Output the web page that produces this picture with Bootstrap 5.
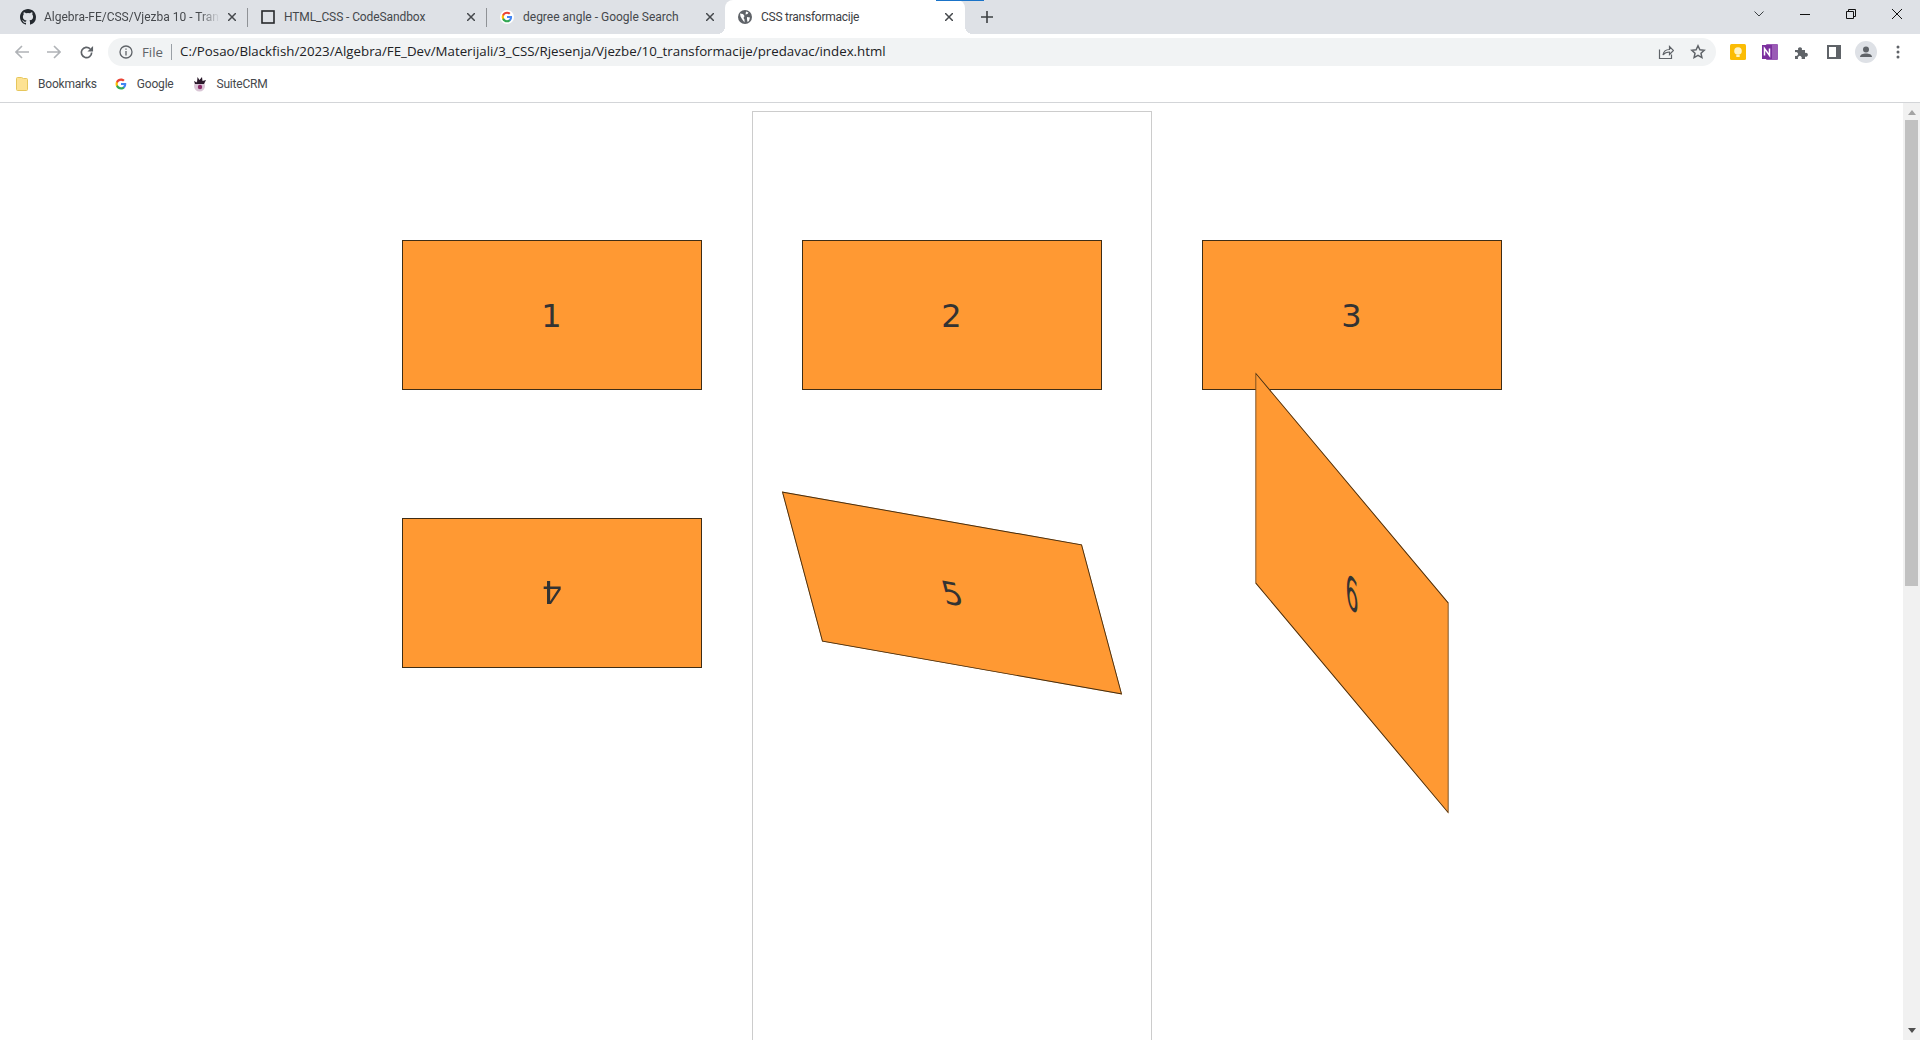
<!DOCTYPE html>
<html lang="en">
<head>
    <meta charset="UTF-8">
    <title>CSS transformacije</title>
    <link href="https://cdn.jsdelivr.net/npm/bootstrap@5.3.0/dist/css/bootstrap.min.css" rel="stylesheet">
    <style>
        html, body { height: 100%; overflow: hidden; }
        body { font-family: "Open Sans", "Liberation Sans", sans-serif; background: #fff; }
        .tabstrip { height: 34px; background: #dee1e6; color: #45484c; font-family: Roboto, "Liberation Sans", sans-serif; font-size: 12px; }
        .tabitem { width: 238px; height: 34px; padding: 0 11px 0 13px; gap: 9px; letter-spacing: -.1px; }
        .tabitem.first { width: 247px; padding-left: 20px; gap: 8px; letter-spacing: 0; }
        .tabitem.plain { letter-spacing: 0; }
        .tabitem.on { width: 240px; background: #fff; border-radius: 8px 8px 0 0; color: #3c4043; padding-right: 12px; letter-spacing: -.25px; }
        .tabitem.on::before, .tabitem.on::after { content: ""; position: absolute; bottom: 0; width: 8px; height: 8px; }
        .tabitem.on::before { left: -8px; background: radial-gradient(circle at 0 0, transparent 8px, #fff 8px); }
        .tabitem.on::after { right: -8px; background: radial-gradient(circle at 100% 0, transparent 8px, #fff 8px); }
        .tabname { flex: 1; white-space: nowrap; overflow: hidden; }
        .tabname.fade-end { -webkit-mask-image: linear-gradient(to right, #000 88%, transparent 100%); mask-image: linear-gradient(to right, #000 88%, transparent 100%); }
        .tabsep { width: 1px; height: 19px; background: #8f9296; }
        .tabplus { margin-left: 16px; }
        .loadbar { position: absolute; top: 0; left: 936px; width: 48px; height: 1px; background: #1a73c8; }
        .winctls { margin-right: 18px; margin-top: -6px; gap: 36px; }
        .toolrow { height: 36px; background: #fff; padding-left: 6px; }
        .navbtn { width: 32px; height: 36px; }
        .urlbox { width: 1608px; height: 28px; margin-left: 6px; background: #f1f3f4; border-radius: 14px; font-size: 13.3px; color: #202124; padding: 0 10px 0 11px; }
        .urlfile { color: #5f6368; margin-left: 9px; padding-right: 8px; border-right: 1px solid #9aa0a6; line-height: 16px; }
        .urltext { margin-left: 8px; flex: 1; white-space: nowrap; }
        .extgap { margin-left: 16px; }
        .extfirst { margin-left: 14px; }
        .extprofile { margin-left: 13px; }
        .extdots { margin-left: 19px; }
        .markrow { height: 33px; background: #fff; border-bottom: 1px solid #d3d5d8; padding: 0 0 4px 16px; font-family: Roboto, "Liberation Sans", sans-serif; font-size: 12px; letter-spacing: -.2px; color: #45484c; gap: 18px; }
        .markitem { gap: 10px; }
        .stage { height: 937px; }
        .pagearea { flex: 1; overflow: hidden; }
        .boxgrid { width: 1200px; margin: 0 auto; padding-top: 8px; }
        .boxcol { width: 400px; height: 1100px; padding: 129px 50px 0; flex-direction: column; gap: 128px; }
        .boxcol.mid { border: 1px solid #ccc; padding: 128px 49px 0; }
        .tbox { width: 300px; height: 150px; background: #ff9933; border: 1px solid #3f2d15; color: #333; font-family: "DejaVu Sans", sans-serif; font-size: 32px; line-height: 1; padding-top: 2px; }
        .rot { transform: rotate(180deg); }
        .skw { transform: skew(15deg, 10deg); }
        .mtx { transform: matrix(0.643, 0.767, 0, 1.407, 0, 0); }
        .scrollrail { width: 17px; background: #f1f1f1; }
        .arrowup { margin-top: 7px; margin-bottom: 5px; }
        .arrowdown { margin-bottom: 7px; }
        .scrollthumb { height: 466px; width: 13px; background: #c1c1c1; }
    </style>
</head>
<body class="position-relative">
    <div class="tabstrip d-flex align-items-center">
        <div class="tabitem first d-flex align-items-center">
            <svg width="16" height="16" viewBox="0 0 16 16" fill="#24292f"><path d="M8 0C3.58 0 0 3.58 0 8c0 3.54 2.29 6.53 5.47 7.59.4.07.55-.17.55-.38v-1.34c-2.23.48-2.7-1.07-2.7-1.07-.36-.93-.89-1.17-.89-1.17-.73-.5.05-.49.05-.49.8.06 1.23.82 1.23.82.71 1.22 1.87.87 2.33.66.07-.52.28-.87.5-1.07-1.78-.2-3.64-.89-3.64-3.95 0-.87.31-1.59.82-2.15-.08-.2-.36-1.02.08-2.12 0 0 .67-.21 2.2.82a7.6 7.6 0 0 1 4 0c1.53-1.04 2.2-.82 2.2-.82.44 1.1.16 1.92.08 2.12.51.56.82 1.27.82 2.15 0 3.07-1.87 3.75-3.65 3.95.29.25.54.73.54 1.48v2.2c0 .21.15.46.55.38A8 8 0 0 0 16 8c0-4.42-3.58-8-8-8z"/></svg>
            <span class="tabname fade-end">Algebra-FE/CSS/Vjezba 10 - Tran</span>
            <svg width="8" height="8" viewBox="0 0 8 8" stroke="#45484c" stroke-width="1.5"><path d="M0 0l8 8M8 0L0 8"/></svg>
        </div>
        <div class="tabsep"></div>
        <div class="tabitem d-flex align-items-center">
            <svg width="14" height="14" viewBox="0 0 14 14" fill="none" stroke="#26282b" stroke-width="1.6"><rect x="1" y="1" width="12" height="12"/></svg>
            <span class="tabname">HTML_CSS - CodeSandbox</span>
            <svg width="8" height="8" viewBox="0 0 8 8" stroke="#45484c" stroke-width="1.5"><path d="M0 0l8 8M8 0L0 8"/></svg>
        </div>
        <div class="tabsep"></div>
        <div class="tabitem plain d-flex align-items-center">
            <svg width="14" height="14" viewBox="-5 -5 58 58"><circle cx="24" cy="24" r="29" fill="#fff"/><path fill="#4285f4" d="M45 24c0-1.600-.1-3-.4-4.400H24v8.400h11.800c-.5 2.700-2 5-4.300 6.600v5.500h7C42.600 36.300 45 30.700 45 24z"/><path fill="#34a853" d="M24 46c5.900 0 10.900-2 14.500-5.300l-7-5.500c-2 1.300-4.500 2.100-7.500 2.100-5.700 0-10.600-3.900-12.300-9H4.400v5.600C8 41 15.500 46 24 46z"/><path fill="#fbbc05" d="M11.700 28.300c-.9-2.700-.9-5.800 0-8.600v-5.600H4.400c-3 6-3 13.800 0 19.800z"/><path fill="#ea4335" d="M24 10.800c3.200 0 6.100 1.100 8.400 3.300l6.200-6.200C34.900 4.400 29.900 2 24 2 15.500 2 8 7 4.400 14.100l7.300 5.600c1.700-5 6.600-8.900 12.300-8.900z"/></svg>
            <span class="tabname">degree angle - Google Search</span>
            <svg width="8" height="8" viewBox="0 0 8 8" stroke="#45484c" stroke-width="1.5"><path d="M0 0l8 8M8 0L0 8"/></svg>
        </div>
        <div class="tabitem on position-relative d-flex align-items-center">
            <svg width="14" height="14" viewBox="0 0 14 14"><circle cx="7" cy="7" r="7" fill="#5f6368"/><path fill="#fff" d="M2 3.500l3 .5 1.500 2-1 2 1 1.500v3L4 9 2.500 6.500zM8 1.500l2.500 1-1 1.500-2 .5zM9 7l3 .5-1 3.500-1.500 1-.5-3z"/></svg>
            <span class="tabname">CSS transformacije</span>
            <svg width="8" height="8" viewBox="0 0 8 8" stroke="#45484c" stroke-width="1.5"><path d="M0 0l8 8M8 0L0 8"/></svg>
        </div>
        <svg class="tabplus" width="12" height="12" viewBox="0 0 12 12" stroke="#3c4043" stroke-width="1.6"><path d="M6 0v12M0 6h12"/></svg>
        <div class="winctls ms-auto d-flex align-items-center">
            <svg width="10" height="10" viewBox="0 0 10 10" fill="none" stroke="#3c4043"><path d="M.5 2.500L5 7l4.500-4.500"/></svg>
            <svg width="10" height="10" viewBox="0 0 10 10" stroke="#111"><path d="M0 5.500h10"/></svg>
            <svg width="10" height="10" viewBox="0 0 10 10" fill="none" stroke="#111"><path d="M.5 2.500h7v7h-7zM2.500 2.500v-2h7v7h-2"/></svg>
            <svg width="10" height="10" viewBox="0 0 10 10" stroke="#111"><path d="M0 0l10 10M10 0L0 10"/></svg>
        </div>
    </div>
    <div class="loadbar"></div>
    <div class="toolrow d-flex align-items-center">
        <div class="navbtn d-flex align-items-center justify-content-center"><svg width="14" height="14" viewBox="0 0 14 14" fill="none" stroke="#b0b3b7" stroke-width="1.6"><path d="M14 7H1.500M7 1L1 7l6 6"/></svg></div>
        <div class="navbtn d-flex align-items-center justify-content-center"><svg width="14" height="14" viewBox="0 0 14 14" fill="none" stroke="#b0b3b7" stroke-width="1.6"><path d="M0 7h12.500M7 1l6 6-6 6"/></svg></div>
        <div class="navbtn d-flex align-items-center justify-content-center"><svg width="15" height="15" viewBox="0 0 16 16" fill="none" stroke="#5f6368" stroke-width="1.800"><path d="M13.500 8a5.500 5.500 0 1 1-1.600-3.900"/><path fill="#5f6368" stroke="none" d="M15 1v6H9z"/></svg></div>
        <div class="urlbox d-flex align-items-center">
            <svg width="14" height="14" viewBox="0 0 14 14" fill="none" stroke="#5f6368" stroke-width="1.300"><circle cx="7" cy="7" r="6"/><path d="M7 6v4.500M7 3.500v1.300"/></svg>
            <span class="urlfile">File</span>
            <span class="urltext">C:/Posao/Blackfish/2023/Algebra/FE_Dev/Materijali/3_CSS/Rjesenja/Vjezbe/10_transformacije/predavac/index.html</span>
            <svg width="16" height="16" viewBox="0 0 16 16" fill="none" stroke="#5f6368" stroke-width="1.200"><path d="M1.500 5.500v9h12v-4M5 11c.5-3.500 3-5.500 6.500-5.500V2.500L15.500 6.500l-4 4V8C8.500 8 6.500 9 5 11z"/></svg>
            <svg class="ms-3" width="16" height="16" viewBox="0 0 16 16" fill="none" stroke="#5f6368" stroke-width="1.500"><path d="M8 1.800l1.900 4 4.300.5-3.200 3 .9 4.300L8 11.400l-3.900 2.200.9-4.300-3.200-3 4.300-.5z"/></svg>
        </div>
        <div class="d-flex align-items-center">
            <svg class="extfirst" width="16" height="16" viewBox="0 0 16 16"><rect width="16" height="16" rx="1.500" fill="#fbbc04"/><circle cx="8" cy="7" r="3.800" fill="#fff3c4"/><rect x="6.300" y="11" width="3.400" height="2" fill="#fff3c4"/></svg>
            <svg class="extgap" width="16" height="16" viewBox="0 0 16 16"><rect x="4" y="0" width="12" height="16" rx="1" fill="#9a5bb5"/><rect width="10" height="14" y="1" fill="#7b2f9e"/><path d="M2.500 11.500v-7l5 7v-7" fill="none" stroke="#fff" stroke-width="1.500"/></svg>
            <svg class="extgap" width="16" height="16" viewBox="0 0 16 16" fill="#5f6368"><path d="M1 6h3.200a2 2 0 1 1 3.600 0H11v3a2 2 0 1 1 0 3.600V15H7.500a2 2 0 1 0-3.400 0H1v-3.300a2 2 0 1 0 0-3.400z"/></svg>
            <svg class="extgap" width="16" height="16" viewBox="0 0 16 16"><rect x="1" y="1" width="14" height="14" fill="#5f6368"/><rect x="3" y="3" width="7" height="10" fill="#fff"/></svg>
            <svg class="extprofile" width="22" height="22" viewBox="0 0 22 22"><circle cx="11" cy="11" r="11" fill="#dee1e6"/><circle cx="11" cy="8.500" r="3" fill="#5f6368"/><path fill="#5f6368" d="M5 16c0-2.500 3-3.500 6-3.500s6 1 6 3.500z"/></svg>
            <svg class="extdots" width="4" height="14" viewBox="0 0 4 14" fill="#5f6368"><circle cx="2" cy="2" r="1.500"/><circle cx="2" cy="7" r="1.500"/><circle cx="2" cy="12" r="1.500"/></svg>
        </div>
    </div>
    <div class="markrow d-flex align-items-center">
        <span class="markitem d-flex align-items-center"><svg width="12" height="15" viewBox="0 0 12 15"><path d="M.5 1.500a1 1 0 0 1 1-1h4l2 1h3a1 1 0 0 1 1 1v10a1 1 0 0 1-1 1h-9a1 1 0 0 1-1-1z" fill="#fde293" stroke="#e6c65c"/></svg>Bookmarks</span>
        <span class="markitem d-flex align-items-center"><svg width="12" height="12" viewBox="0 0 48 48"><path fill="#4285f4" d="M45 24c0-1.600-.1-3-.4-4.400H24v8.400h11.800c-.5 2.700-2 5-4.300 6.600v5.500h7C42.600 36.300 45 30.700 45 24z"/><path fill="#34a853" d="M24 46c5.900 0 10.900-2 14.500-5.300l-7-5.500c-2 1.300-4.500 2.100-7.500 2.100-5.700 0-10.600-3.900-12.300-9H4.400v5.600C8 41 15.500 46 24 46z"/><path fill="#fbbc05" d="M11.700 28.300c-.9-2.700-.9-5.800 0-8.600v-5.600H4.400c-3 6-3 13.800 0 19.800z"/><path fill="#ea4335" d="M24 10.800c3.200 0 6.100 1.100 8.400 3.300l6.200-6.200C34.900 4.400 29.900 2 24 2 15.500 2 8 7 4.400 14.100l7.300 5.600c1.700-5 6.600-8.900 12.300-8.900z"/></svg>Google</span>
        <span class="markitem d-flex align-items-center"><svg width="15" height="15" viewBox="0 0 15 15"><circle cx="7.500" cy="9" r="5.500" fill="#d9c6d6"/><path d="M2 4l3 1.500L5.500 0l2 3L10 0l.5 4L14 3l-2 4H3z" fill="#2a1a2a"/><circle cx="8" cy="10" r="2.200" fill="#8c2f6b"/></svg>SuiteCRM</span>
    </div>
    <div class="stage d-flex">
        <div class="pagearea">
            <div class="boxgrid row g-0 flex-nowrap">
                <div class="boxcol d-flex col-auto">
                    <div class="tbox d-flex align-items-center justify-content-center">1</div>
                    <div class="tbox rot d-flex align-items-center justify-content-center">4</div>
                </div>
                <div class="boxcol mid d-flex col-auto">
                    <div class="tbox d-flex align-items-center justify-content-center">2</div>
                    <div class="tbox skw d-flex align-items-center justify-content-center">5</div>
                </div>
                <div class="boxcol d-flex col-auto">
                    <div class="tbox d-flex align-items-center justify-content-center">3</div>
                    <div class="tbox mtx d-flex align-items-center justify-content-center">6</div>
                </div>
            </div>
        </div>
        <div class="scrollrail d-flex flex-column align-items-center">
            <svg class="arrowup" width="8" height="5" viewBox="0 0 8 5" fill="#a3a3a3"><path d="M4 0l4 5H0z"/></svg>
            <div class="scrollthumb"></div>
            <svg class="arrowdown mt-auto" width="8" height="5" viewBox="0 0 8 5" fill="#505050"><path d="M4 5l4-5H0z"/></svg>
        </div>
    </div>
    <script src="https://cdn.jsdelivr.net/npm/bootstrap@5.3.0/dist/js/bootstrap.bundle.min.js"></script>
</body>
</html>
